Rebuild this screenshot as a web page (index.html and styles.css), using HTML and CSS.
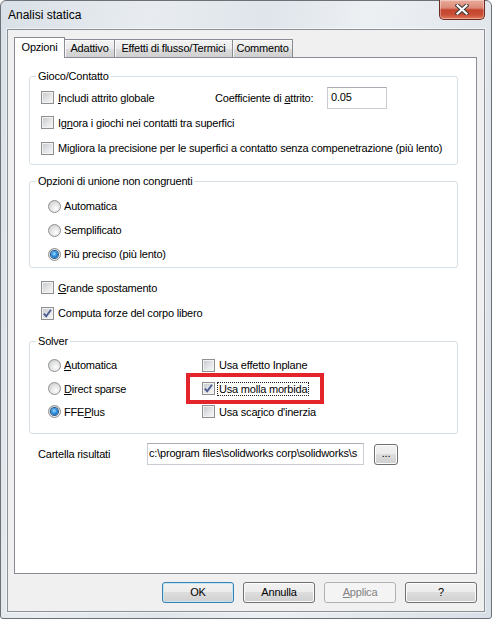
FILE: index.html
```html
<!DOCTYPE html>
<html lang="it">
<head>
    <meta charset="UTF-8">
    <meta name="viewport" content="width=device-width, initial-scale=1.0">
    <title>Analisi statica</title>
    <link rel="stylesheet" href="styles.css">
</head>
<body>
    <div class="window">
        <div class="titlebar">
            <span class="title">Analisi statica</span>
            <div class="close-btn">
                <svg width="14" height="11" viewBox="0 0 14 11">
                    <path d="M2.5 1.5 L11.5 9.5 M11.5 1.5 L2.5 9.5" stroke="#3b3b3b" stroke-width="4.2" stroke-linecap="square"/>
                    <path d="M2.5 1.5 L11.5 9.5 M11.5 1.5 L2.5 9.5" stroke="#fff" stroke-width="2.2" stroke-linecap="square"/>
                </svg>
            </div>
        </div>

        <div class="client">
            <div class="tabs">
                <div class="tab active">Opzioni</div>
                <div class="tab tab-adattivo">Adattivo</div>
                <div class="tab tab-effetti">Effetti di flusso/Termici</div>
                <div class="tab tab-commento">Commento</div>
            </div>

            <div class="panel">
                <!-- Gioco/Contatto -->
                <div class="group gioco">
                    <div class="legend">Gioco/Contatto</div>
                    <div class="group-body">
                        <div class="row coef-row">
                            <div class="check"><span class="box"></span><span><u>I</u>ncludi attrito globale</span></div>
                            <span class="coef-label">Coefficiente di <u>a</u>ttrito:</span>
                            <div class="textbox coef">0.05</div>
                        </div>
                        <div class="row">
                            <div class="check"><span class="box"></span><span>Ig<u>n</u>ora i giochi nei contatti tra superfici</span></div>
                        </div>
                        <div class="row row-tall">
                            <div class="check"><span class="box"></span><span>Migliora la precisione per le superfici a contatto senza compenetrazione (più lento)</span></div>
                        </div>
                    </div>
                </div>

                <!-- Opzioni di unione -->
                <div class="group unione">
                    <div class="legend">Opzioni di unione non congruenti</div>
                    <div class="group-body">
                        <div class="radio-row"><span class="radio"></span><span>Automatica</span></div>
                        <div class="radio-row"><span class="radio"></span><span>Semplificato</span></div>
                        <div class="radio-row"><span class="radio on"></span><span>Più preciso (più lento)</span></div>
                    </div>
                </div>

                <div class="loose">
                    <div class="row">
                        <div class="check"><span class="box"></span><span><u>G</u>rande spostamento</span></div>
                    </div>
                    <div class="row row-tall">
                        <div class="check">
                            <span class="box"><svg width="11" height="11" viewBox="0 0 11 11"><polyline points="1.8,5.6 4.2,8.2 9,1.8" fill="none" stroke="#4b5d92" stroke-width="1.9"/></svg></span>
                            <span>Computa forze del corpo libero</span>
                        </div>
                    </div>
                </div>

                <!-- Solver -->
                <div class="group solver">
                    <div class="legend">Solver</div>
                    <div class="group-body solver-grid">
                        <div class="radio-row"><span class="radio"></span><span><u>A</u>utomatica</span></div>
                        <div class="check"><span class="box"></span><span>Usa effetto Inplane</span></div>
                        <div class="radio-row"><span class="radio"></span><span><u>D</u>irect sparse</span></div>
                        <div class="check">
                            <span class="box"><svg width="11" height="11" viewBox="0 0 11 11"><polyline points="1.8,5.6 4.2,8.2 9,1.8" fill="none" stroke="#4b5d92" stroke-width="1.9"/></svg></span>
                            <span class="focused">Usa molla morbida</span>
                        </div>
                        <div class="radio-row"><span class="radio on"></span><span>FFE<u>P</u>lus</span></div>
                        <div class="check"><span class="box"></span><span>Usa sca<u>r</u>ico d'inerzia</span></div>
                    </div>
                    <div class="annotation"></div>
                </div>

                <div class="folder-row">
                    <span class="folder-label">Cartella risultati</span>
                    <div class="textbox path">c:\program files\solidworks corp\solidworks\s</div>
                    <div class="btn browse">...</div>
                </div>
            </div>

            <div class="buttons">
                <div class="btn default">OK</div>
                <div class="btn">Annulla</div>
                <div class="btn disabled"><u>A</u>pplica</div>
                <div class="btn">?</div>
            </div>
        </div>
    </div>
</body>
</html>
```

FILE: styles.css
```css
* {
    box-sizing: border-box;
}

body {
    margin: 0;
    background: #fff;
    font-family: 'Liberation Sans', Arial, sans-serif;
    font-size: 11px;
    letter-spacing: -0.2px;
    color: #000;
}

u {
    text-decoration: underline;
    text-underline-offset: 1px;
}

/* window frame */
.window {
    width: 492px;
    height: 619px;
    border: 1px solid #6c7178;
    border-radius: 6px 6px 3px 3px;
    background: linear-gradient(100deg, #d9e0e7 0%, #e8ecf0 25%, #dfe5eb 45%, #edf0f3 62%, #d8dfe6 100%);
    padding: 0 6px 6px 6px;
    display: flex;
    flex-direction: column;
}

.titlebar {
    height: 28px;
    flex-shrink: 0;
    display: flex;
    justify-content: space-between;
    align-items: flex-start;
}

.title {
    font-size: 12px;
    letter-spacing: 0;
    line-height: 14px;
    padding: 7px 0 0 1px;
}

.close-btn {
    width: 46px;
    height: 20px;
    margin-top: -1px;
    border: 1px solid #6b2a21;
    border-top: none;
    border-radius: 0 0 5px 5px;
    background: linear-gradient(#e9ab9b 0%, #dc8a77 42%, #c4452f 52%, #cb4e36 78%, #e07d60 100%);
    box-shadow: inset 0 0 0 1px rgba(255, 255, 255, 0.35);
    display: flex;
    align-items: center;
    justify-content: center;
}

.client {
    flex: 1;
    border: 1px solid #8b9097;
    box-shadow: 0 0 0 1px rgba(255, 255, 255, 0.5);
    background: #f0f0f0;
    padding: 7px 7px 0 6px;
    display: flex;
    flex-direction: column;
}

/* tabs */
.tabs {
    display: flex;
    align-items: flex-end;
    height: 20px;
}

.tab {
    height: 18px;
    margin-left: -1px;
    border: 1px solid #898c95;
    border-bottom: none;
    background: linear-gradient(#f3f3f3, #ebebeb 50%, #dddddd 50%, #d0d0d0);
    box-shadow: inset 1px 1px 0 #fbfbfb;
    text-align: center;
    line-height: 17px;
}

.tab.active {
    width: 51px;
    height: 21px;
    margin: 0 0 -1px 0;
    background: #fff;
    box-shadow: none;
    line-height: 19px;
    position: relative;
    z-index: 1;
}

.tab-adattivo { width: 51px; }
.tab-effetti { width: 119px; }
.tab-commento { width: 61px; }

.panel {
    height: 517px;
    border: 1px solid #898c95;
    background: #fff;
    padding-top: 18px;
}

/* group boxes */
.group {
    width: 429px;
    margin-left: 14px;
    border: 1px solid #d5dfe5;
    border-radius: 3px;
}

.legend {
    width: fit-content;
    margin: -7px 0 0 6px;
    padding: 0 2px;
    background: #fff;
    line-height: 13px;
}

.gioco .group-body {
    padding: 2px 0 3px 11px;
}

.unione {
    margin-top: 16px;
}

.unione .group-body {
    padding: 6px 0 1px 18px;
}

.unione .radio-row {
    height: 24px;
}

.row {
    display: flex;
    align-items: center;
    height: 25px;
}

.row-tall {
    height: 26px;
}

.coef-row {
    display: grid;
    grid-template-columns: 174px 112px 60px;
    align-items: center;
}

.loose {
    margin: 7px 0 0 26px;
}

.solver {
    margin-top: 15px;
    position: relative;
}

.solver-grid {
    display: grid;
    grid-template-columns: 154px auto;
    grid-template-rows: 24px 23px 23px;
    align-items: center;
    padding: 5px 0 10px 18px;
}

/* red highlight drawn over the solver options */
.annotation {
    position: absolute;
    left: 156px;
    top: 31px;
    width: 138px;
    height: 31px;
    border: 4px solid #e3242b;
}

/* controls */
.check {
    display: flex;
    align-items: center;
    gap: 4px;
    white-space: nowrap;
}

.box {
    width: 13px;
    height: 13px;
    flex-shrink: 0;
    border: 1px solid #8e8f8f;
    background: linear-gradient(135deg, #c2c5ca 0%, #e4e5e7 55%, #f8f8f8 100%);
    box-shadow: inset 0 0 0 1px #f2f2f2;
    display: flex;
    align-items: center;
    justify-content: center;
}

.focused {
    outline: 1px dotted #222;
    padding: 0 1px;
    line-height: 12px;
    margin-left: -1px;
}

.radio-row {
    display: flex;
    align-items: center;
    gap: 3px;
}

.radio {
    width: 13px;
    height: 13px;
    flex-shrink: 0;
    border-radius: 50%;
    border: 1px solid #8e8f8f;
    background: radial-gradient(circle at 62% 68%, #fdfdfd 0%, #e8e8e8 40%, #c4c6c9 100%);
    display: flex;
    align-items: center;
    justify-content: center;
}

.radio.on::after {
    content: '';
    width: 7px;
    height: 7px;
    border-radius: 50%;
    background: radial-gradient(circle at 45% 40%, #a6e0ff 0%, #2b8ee0 45%, #0d4a8a 100%);
    box-shadow: 0 0 0 1px #27598c;
}

.textbox {
    height: 22px;
    border: 1px solid #c8ccd3;
    border-top-color: #a9acb3;
    background: #fff;
    line-height: 19px;
}

.coef {
    padding-left: 3px;
}

.folder-row {
    display: flex;
    align-items: center;
    height: 22px;
    margin: 9px 0 0 23px;
}

.folder-label {
    width: 109px;
}

.path {
    width: 217px;
    padding-left: 1px;
    overflow: hidden;
    white-space: nowrap;
}

/* buttons */
.btn {
    width: 72px;
    height: 21px;
    border: 1px solid #707070;
    border-radius: 3px;
    background: linear-gradient(#f2f2f2, #ebebeb 50%, #dddddd 50%, #cfcfcf);
    box-shadow: inset 0 0 0 1px #fcfcfc;
    text-align: center;
    line-height: 19px;
}

.browse {
    width: 24px;
    margin-left: 10px;
    line-height: 17px;
}

.buttons {
    display: flex;
    justify-content: flex-end;
    gap: 9px;
    margin-top: 8px;
}

.btn.default {
    border-color: #3c7fb1;
    box-shadow: inset 0 0 0 1px #c4e5f6;
}

.btn.disabled {
    border-color: #adb2b5;
    background: #f4f4f4;
    box-shadow: none;
    color: #838383;
}
```
